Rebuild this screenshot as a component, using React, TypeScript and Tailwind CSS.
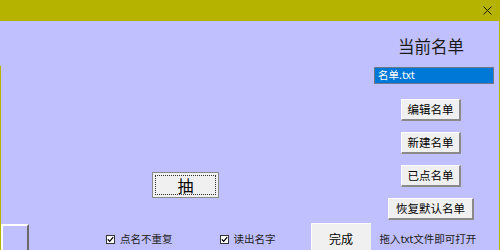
const font = "font-['SimSun','Noto_Sans_CJK_SC',sans-serif]";

function WinButton({ label, className = '' }: { label: string; className?: string }) {
  return (
    <div
      className={`flex items-center justify-center bg-[#f0f0f0] border-t border-l border-white border-r-2 border-b-2 border-r-[#8a8a8a] border-b-[#8a8a8a] text-[11.5px] leading-none text-black ${className}`}
    >
      {label}
    </div>
  );
}

function CheckBox({ label }: { label: string }) {
  return (
    <div className="flex items-center gap-[5px]">
      <div className="w-[9px] h-[9px] bg-white border border-[#333] flex items-center justify-center">
        <svg width="7" height="7" viewBox="0 0 7 7">
          <path d="M0.8 3.4 L2.7 5.3 L6.2 1.2" stroke="#000" strokeWidth="1.3" fill="none" />
        </svg>
      </div>
      <span className="text-[10.5px] leading-none text-[#222]">{label}</span>
    </div>
  );
}

export default function App() {
  return (
    <div className={`w-[500px] h-[250px] flex flex-col bg-[#c0c0ff] overflow-hidden ${font}`}>
      {/* title bar */}
      <div className="h-[21px] bg-[#b6b300] flex items-center justify-end pr-[8px] shrink-0">
        <svg width="9" height="9" viewBox="0 0 9 9">
          <path d="M0.5 0.5 L8.5 8.5 M8.5 0.5 L0.5 8.5" stroke="#1a1a1a" strokeWidth="1" />
        </svg>
      </div>

      <div className="flex flex-1 border-b border-[#b6b300]">
        {/* left edge, starts partway down */}
        <div className="w-px mt-[45px] bg-[#b6b300]" />

        <div className="flex-1 flex flex-col">
          <div className="flex h-[202px]">
            {/* draw area */}
            <div className="flex-1">
              <div className="ml-[151px] mt-[151px] w-[67px] h-[26px] bg-[#f0f0f0] border border-[#8a8a8a] p-[2px]">
                <div className="w-full h-full border border-dotted border-[#333] flex items-center justify-center text-[16px] leading-none text-black">
                  抽
                </div>
              </div>
            </div>

            {/* right column */}
            <div className="w-[135px] flex flex-col items-start">
              <div className="ml-[34px] mt-[16px] text-[16.5px] leading-[18px] text-[#1a1a1a]">当前名单</div>
              <div className="ml-[10px] mt-[12px] w-[120px] h-[17px] bg-[#0078d7] border border-[#6d7a8a] flex items-center pl-[3px] text-[10.5px] leading-none text-white">
                名单.txt
              </div>
              <WinButton label="编辑名单" className="ml-[37px] mt-[15px] w-[60px] h-[22px]" />
              <WinButton label="新建名单" className="ml-[37px] mt-[11px] w-[60px] h-[22px]" />
              <WinButton label="已点名单" className="ml-[37px] mt-[11px] w-[60px] h-[22px]" />
              <WinButton label="恢复默认名单" className="ml-[24px] mt-[11px] w-[86px] h-[22px]" />
            </div>
          </div>

          {/* bottom row */}
          <div className="flex flex-1 items-start">
            <div className="mt-[1px] w-[28px] h-[26px] border-t-2 border-l-2 border-white border-r-2 border-r-[#6a6a6a]" />
            <div className="ml-[77px] mt-[11px]">
              <CheckBox label="点名不重复" />
            </div>
            <div className="ml-[47px] mt-[11px]">
              <CheckBox label="读出名字" />
            </div>
            <div className="ml-[35px] w-[60px] h-[28px] bg-[#f0f0f0] border-t border-l border-white flex items-center justify-center text-[12px] leading-none text-black pt-[2px]">
              完成
            </div>
            <div className="ml-[9px] mt-[11px] text-[10.5px] leading-none text-[#1a1a1a] whitespace-nowrap">
              拖入txt文件即可打开
            </div>
          </div>
        </div>

        <div className="w-px bg-[#b6b300]" />
      </div>
    </div>
  );
}
